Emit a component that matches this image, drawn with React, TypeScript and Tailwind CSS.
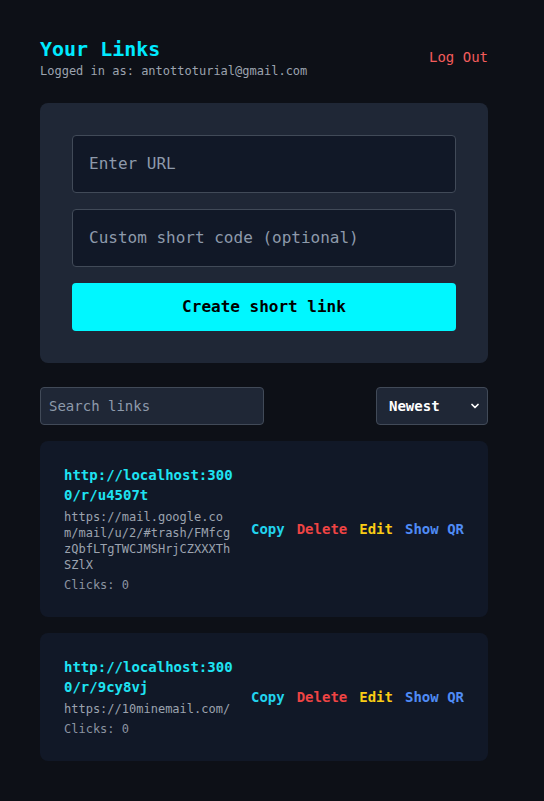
import { ChevronDown } from 'lucide-react';

type LinkItem = {
  short: string;
  original: string;
  clicks: number;
};

const links: LinkItem[] = [
  {
    short: 'http://localhost:3000/r/u4507t',
    original: 'https://mail.google.com/mail/u/2/#trash/FMfcgzQbfLTgTWCJMSHrjCZXXXThSZlX',
    clicks: 0,
  },
  {
    short: 'http://localhost:3000/r/9cy8vj',
    original: 'https://10minemail.com/',
    clicks: 0,
  },
];

function LinkCard({ short, original, clicks }: LinkItem) {
  return (
    <div className="flex items-center justify-between gap-4 rounded-lg bg-[#111827] p-6">
      <div className="min-w-0 flex-1">
        <p className="break-all text-sm font-bold text-[#1ee3f2]">{short}</p>
        <p className="mt-1 break-all text-xs text-[#9ca3af]">{original}</p>
        <p className="mt-1 text-xs text-[#8b93a1]">Clicks: {clicks}</p>
      </div>
      <div className="flex shrink-0 items-center gap-3 text-sm font-semibold">
        <button className="text-[#22d3ee]">Copy</button>
        <button className="text-[#ef4444]">Delete</button>
        <button className="text-[#facc15]">Edit</button>
        <button className="text-[#4f8bf5]">Show QR</button>
      </div>
    </div>
  );
}

export default function App() {
  return (
    <div className="min-h-screen bg-[#0d1017] px-10 pt-[35px] pb-10 font-['DejaVu_Sans_Mono',monospace] text-white">
      <div className="max-w-md">
        <header className="mb-6 flex items-center justify-between">
          <div>
            <h1 className="text-xl font-bold text-[#00eaff]">Your Links</h1>
            <p className="text-xs text-[#9ca3af]">Logged in as: antottoturial@gmail.com</p>
          </div>
          <button className="text-sm text-[#f25c5c]">Log Out</button>
        </header>

        <div className="mb-6 flex flex-col gap-4 rounded-lg bg-[#1f2736] p-8">
          <input
            placeholder="Enter URL"
            className="rounded border border-[#414a58] bg-[#111827] px-4 py-4 text-base text-white outline-none placeholder:text-[#8e9aab]"
          />
          <input
            placeholder="Custom short code (optional)"
            className="rounded border border-[#414a58] bg-[#111827] px-4 py-4 text-base text-white outline-none placeholder:text-[#8e9aab]"
          />
          <button className="rounded bg-[#00f7ff] py-3 text-base font-bold text-black">
            Create short link
          </button>
        </div>

        <div className="mb-4 flex items-center justify-between">
          <input
            placeholder="Search links"
            className="w-[224px] rounded border border-[#414a58] bg-[#1f2736] px-2 py-2 text-sm text-white outline-none placeholder:text-[#8e9aab]"
          />
          <div className="flex w-[112px] items-center justify-between rounded border border-[#414a58] bg-[#1f2736] py-2 pl-3 pr-1.5 text-sm font-bold text-white">
            <span>Newest</span>
            <ChevronDown size={12} strokeWidth={3.5} />
          </div>
        </div>

        <div className="flex flex-col gap-4">
          {links.map((l) => (
            <LinkCard key={l.short} {...l} />
          ))}
        </div>
      </div>
    </div>
  );
}
